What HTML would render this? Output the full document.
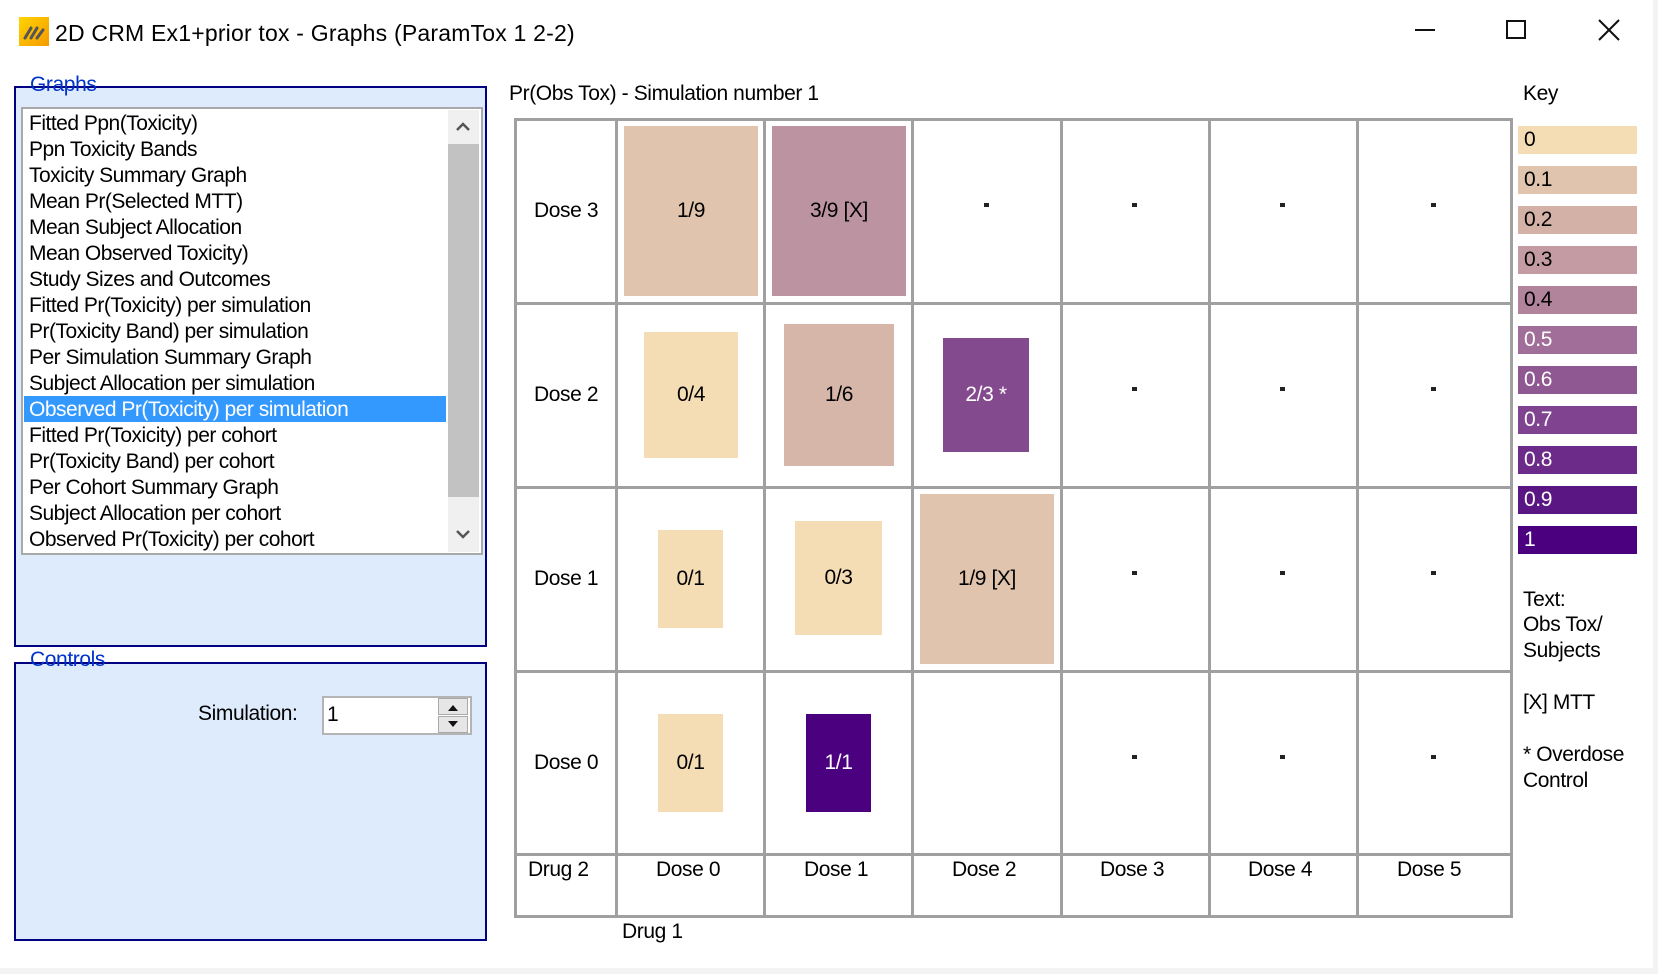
<!DOCTYPE html>
<html><head><meta charset="utf-8"><style>
*{margin:0;padding:0;box-sizing:border-box}
body{width:1658px;height:974px;background:#fff;position:relative;overflow:hidden;font-family:"Liberation Sans",sans-serif;color:#000}
.a{position:absolute;white-space:nowrap}
.t{font-size:21px;letter-spacing:-0.4px;line-height:24px}
.vl{position:absolute;width:3px;background:#a0a0a0}
.hl{position:absolute;height:3px;background:#a0a0a0}
.box{position:absolute;display:flex;align-items:center;justify-content:center;font-size:21px;letter-spacing:-0.4px}
.dot{position:absolute;width:5px;height:4px;background:#222}
.grp{position:absolute;border:2px solid #000080;background:#deebfc}
.leg{position:absolute;background:#fff;color:#0033cc;font-size:21px;letter-spacing:-0.4px;padding:0 1px;line-height:22px}
.item{position:absolute;left:29px;font-size:21px;letter-spacing:-0.5px;line-height:26px;height:26px}
.sw{position:absolute;left:1518px;width:119px;height:28px;font-size:21px;padding-left:6px;line-height:28px;letter-spacing:-0.4px}
</style></head><body>
<div class="a" style="left:19px;top:17px;width:30px;height:29px;background:linear-gradient(135deg,#ffd400,#f59a00)">
<svg width="30" height="29"><g stroke="#555" stroke-width="3" stroke-linecap="round"><line x1="6" y1="21" x2="12" y2="11"/><line x1="12" y1="21" x2="18" y2="11"/><line x1="18" y1="21" x2="24" y2="13"/></g></svg></div>
<div class="a" style="left:55px;top:19px;font-size:23px;line-height:28px;letter-spacing:0.2px">2D CRM Ex1+prior tox - Graphs (ParamTox 1 2-2)</div>
<div class="a" style="left:1415px;top:29px;width:20px;height:2px;background:#111"></div>
<div class="a" style="left:1506px;top:20px;width:20px;height:19px;border:2px solid #111"></div>
<svg class="a" style="left:1598px;top:19px" width="22" height="22"><g stroke="#111" stroke-width="2"><line x1="1" y1="1" x2="21" y2="21"/><line x1="21" y1="1" x2="1" y2="21"/></g></svg>
<div class="a" style="left:1653px;top:0;width:5px;height:974px;background:#f3f3f3"></div>
<div class="a" style="left:0;top:968px;width:1658px;height:6px;background:#f3f3f3"></div>

<div class="grp" style="left:14px;top:86px;width:473px;height:561px"></div>
<div class="leg" style="left:29px;top:74px;background:transparent">Graphs</div>
<div class="a" style="left:21px;top:107px;width:462px;height:448px;background:#fff;border:2px solid #a9a9a9"></div>
<div class="a" style="left:448px;top:110px;width:31px;height:442px;background:#f0f0f0"></div>
<div class="a" style="left:448px;top:144px;width:31px;height:353px;background:#c2c2c2"></div>
<svg class="a" style="left:455px;top:120px" width="16" height="12"><polyline points="2,10 8,4 14,10" fill="none" stroke="#555" stroke-width="2.5"/></svg>
<svg class="a" style="left:455px;top:529px" width="16" height="12"><polyline points="2,2 8,8 14,2" fill="none" stroke="#555" stroke-width="2.5"/></svg>
<div class="a" style="left:24px;top:396px;width:422px;height:26px;background:#3399ff"></div>
<div class="item" style="top:111px">Fitted Ppn(Toxicity)</div>
<div class="item" style="top:137px">Ppn Toxicity Bands</div>
<div class="item" style="top:163px">Toxicity Summary Graph</div>
<div class="item" style="top:189px">Mean Pr(Selected MTT)</div>
<div class="item" style="top:215px">Mean Subject Allocation</div>
<div class="item" style="top:241px">Mean Observed Toxicity)</div>
<div class="item" style="top:267px">Study Sizes and Outcomes</div>
<div class="item" style="top:293px">Fitted Pr(Toxicity) per simulation</div>
<div class="item" style="top:319px">Pr(Toxicity Band) per simulation</div>
<div class="item" style="top:345px">Per Simulation Summary Graph</div>
<div class="item" style="top:371px">Subject Allocation per simulation</div>
<div class="item" style="top:397px;color:#fff">Observed Pr(Toxicity) per simulation</div>
<div class="item" style="top:423px">Fitted Pr(Toxicity) per cohort</div>
<div class="item" style="top:449px">Pr(Toxicity Band) per cohort</div>
<div class="item" style="top:475px">Per Cohort Summary Graph</div>
<div class="item" style="top:501px">Subject Allocation per cohort</div>
<div class="item" style="top:527px">Observed Pr(Toxicity) per cohort</div>

<div class="grp" style="left:14px;top:662px;width:473px;height:279px"></div>
<div class="leg" style="left:29px;top:649px;background:transparent">Controls</div>
<div class="a t" style="left:198px;top:702px">Simulation:</div>
<div class="a" style="left:322px;top:696px;width:150px;height:39px;background:#fff;border:2px solid #b4b4b4"></div>
<div class="a t" style="left:327px;top:703px">1</div>
<div class="a" style="left:438px;top:698px;width:30px;height:17px;background:#e6e6e6;border:1px solid #aaa"></div>
<div class="a" style="left:438px;top:716px;width:30px;height:17px;background:#e6e6e6;border:1px solid #aaa"></div>
<svg class="a" style="left:446px;top:702px" width="14" height="28"><polygon points="2,9 12,9 7,3" fill="#111"/><polygon points="2,19 12,19 7,25" fill="#111"/></svg>

<div class="a t" style="left:509px;top:82px">Pr(Obs Tox) - Simulation number 1</div>
<div class="vl" style="left:514px;top:118px;height:799px"></div>
<div class="vl" style="left:615px;top:118px;height:799px"></div>
<div class="vl" style="left:763px;top:118px;height:799px"></div>
<div class="vl" style="left:911px;top:118px;height:799px"></div>
<div class="vl" style="left:1060px;top:118px;height:799px"></div>
<div class="vl" style="left:1208px;top:118px;height:799px"></div>
<div class="vl" style="left:1356px;top:118px;height:799px"></div>
<div class="vl" style="left:1510px;top:118px;height:799px"></div>
<div class="hl" style="left:514px;top:118px;width:999px"></div>
<div class="hl" style="left:514px;top:302px;width:999px"></div>
<div class="hl" style="left:514px;top:486px;width:999px"></div>
<div class="hl" style="left:514px;top:670px;width:999px"></div>
<div class="hl" style="left:514px;top:853px;width:999px"></div>
<div class="hl" style="left:514px;top:915px;width:999px"></div>

<div class="a t" style="left:534px;top:199px">Dose 3</div>
<div class="a t" style="left:534px;top:383px">Dose 2</div>
<div class="a t" style="left:534px;top:567px">Dose 1</div>
<div class="a t" style="left:534px;top:751px">Dose 0</div>
<div class="a t" style="left:528px;top:858px">Drug 2</div>
<div class="a t" style="left:656px;top:858px">Dose 0</div>
<div class="a t" style="left:804px;top:858px">Dose 1</div>
<div class="a t" style="left:952px;top:858px">Dose 2</div>
<div class="a t" style="left:1100px;top:858px">Dose 3</div>
<div class="a t" style="left:1248px;top:858px">Dose 4</div>
<div class="a t" style="left:1397px;top:858px">Dose 5</div>
<div class="a t" style="left:622px;top:920px">Drug 1</div>

<div class="box" style="left:624px;top:126px;width:134px;height:170px;background:#e0c4ad">1/9</div>
<div class="box" style="left:772px;top:126px;width:134px;height:170px;background:#bc93a0">3/9 [X]</div>
<div class="box" style="left:644px;top:332px;width:94px;height:126px;background:#f4ddb4">0/4</div>
<div class="box" style="left:784px;top:324px;width:110px;height:142px;background:#d6b6a8">1/6</div>
<div class="box" style="left:943px;top:338px;width:86px;height:114px;background:#844a8e;color:#fff">2/3 *</div>
<div class="box" style="left:658px;top:530px;width:65px;height:98px;background:#f4ddb4">0/1</div>
<div class="box" style="left:795px;top:521px;width:87px;height:114px;background:#f4ddb4">0/3</div>
<div class="box" style="left:920px;top:494px;width:134px;height:170px;background:#e0c4ad">1/9 [X]</div>
<div class="box" style="left:658px;top:714px;width:65px;height:98px;background:#f4ddb4">0/1</div>
<div class="box" style="left:806px;top:714px;width:65px;height:98px;background:#4b007f;color:#fff">1/1</div>

<div class="dot" style="left:984px;top:203px"></div>
<div class="dot" style="left:1132px;top:203px"></div>
<div class="dot" style="left:1280px;top:203px"></div>
<div class="dot" style="left:1431px;top:203px"></div>
<div class="dot" style="left:1132px;top:387px"></div>
<div class="dot" style="left:1280px;top:387px"></div>
<div class="dot" style="left:1431px;top:387px"></div>
<div class="dot" style="left:1132px;top:571px"></div>
<div class="dot" style="left:1280px;top:571px"></div>
<div class="dot" style="left:1431px;top:571px"></div>
<div class="dot" style="left:1132px;top:755px"></div>
<div class="dot" style="left:1280px;top:755px"></div>
<div class="dot" style="left:1431px;top:755px"></div>

<div class="a t" style="left:1523px;top:82px">Key</div>
<div class="sw" style="top:126px;background:#f4ddb4">0</div>
<div class="sw" style="top:166px;background:#e0c4ad">0.1</div>
<div class="sw" style="top:206px;background:#d4b1a7">0.2</div>
<div class="sw" style="top:246px;background:#c49ba3">0.3</div>
<div class="sw" style="top:286px;background:#b2849c">0.4</div>
<div class="sw" style="top:326px;background:#a06e98;color:#fff">0.5</div>
<div class="sw" style="top:366px;background:#8f5893;color:#fff">0.6</div>
<div class="sw" style="top:406px;background:#7f438f;color:#fff">0.7</div>
<div class="sw" style="top:446px;background:#6c2b89;color:#fff">0.8</div>
<div class="sw" style="top:486px;background:#5a1683;color:#fff">0.9</div>
<div class="sw" style="top:526px;background:#4b007f;color:#fff">1</div>
<div class="a t" style="left:1523px;top:588px">Text:</div>
<div class="a t" style="left:1523px;top:613px">Obs Tox/</div>
<div class="a t" style="left:1523px;top:639px">Subjects</div>
<div class="a t" style="left:1523px;top:691px">[X] MTT</div>
<div class="a t" style="left:1523px;top:743px">* Overdose</div>
<div class="a t" style="left:1523px;top:769px">Control</div>
</body></html>
